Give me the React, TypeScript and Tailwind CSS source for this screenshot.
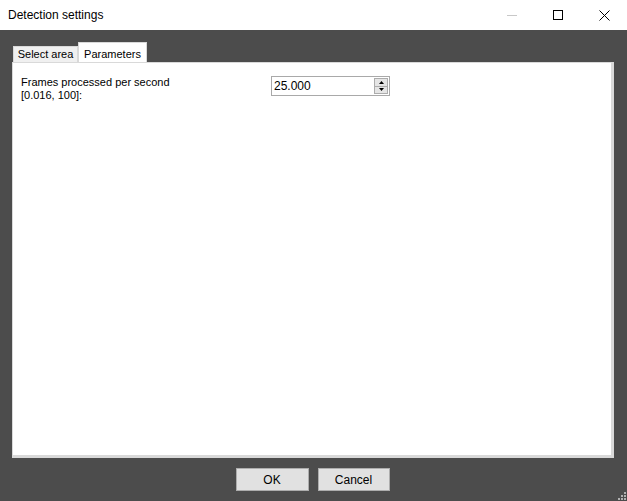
export default function App() {
  const font = { fontFamily: '"Liberation Sans", Arial, sans-serif' };
  return (
    <div className="flex h-[501px] w-[627px] flex-col bg-[#4c4c4c] text-black" style={font}>
      {/* Title bar */}
      <div className="flex h-[30px] shrink-0 items-center bg-white">
        <div className="flex-1 pl-[8px] text-[12px]">Detection settings</div>
        <div className="flex h-full">
          <div className="flex w-[46px] items-center justify-center">
            <div className="h-px w-[10px] bg-[#c8c8c8]" />
          </div>
          <div className="flex w-[46px] items-center justify-center">
            <div className="h-[10px] w-[10px] border border-black" />
          </div>
          <div className="flex w-[46px] items-center justify-center">
            <svg width="11" height="11" viewBox="0 0 11 11">
              <path d="M0.5 0.5L10.5 10.5M10.5 0.5L0.5 10.5" stroke="black" strokeWidth="1" />
            </svg>
          </div>
        </div>
      </div>

      {/* Tabs */}
      <div className="flex flex-1 flex-col px-[12px] pt-[12px]">
        <div className="flex h-[20px] items-end pl-[1px] text-[11px]">
          <div className="flex h-[16px] w-[65px] items-center justify-center border border-b-0 border-[#d9d9d9] bg-[#f0f0f0]">
            Select area
          </div>
          <div className="flex h-[20px] w-[69px] items-start justify-center border border-b-0 border-[#d9d9d9] bg-white pt-[3px]">
            Parameters
          </div>
        </div>
        <div className="flex h-[396px] w-[602px] border border-[#d9d9d9] border-r-[3px] border-b-[3px] bg-white px-[8px] pt-[13px] text-[11px]">
          <div className="w-[250px] leading-[13px]">
            <div>Frames processed per second</div>
            <div>[0.016, 100]:</div>
          </div>
          <div className="flex h-[20px] w-[119px] items-center border border-[#a9a9a9] bg-white">
            <div className="flex-1 pl-[2px] text-[12px]">25.000</div>
            <div className="mr-[1px] flex h-[16px] w-[14px] flex-col border border-[#acacac] bg-[#e5e5e5]">
              <div className="flex flex-1 items-center justify-center border-b border-[#acacac]">
                <svg width="5" height="3" viewBox="0 0 5 3"><path d="M2.5 0L5 3H0Z" fill="black" /></svg>
              </div>
              <div className="flex flex-1 items-center justify-center">
                <svg width="5" height="3" viewBox="0 0 5 3"><path d="M0 0H5L2.5 3Z" fill="black" /></svg>
              </div>
            </div>
          </div>
        </div>

        {/* Buttons */}
        <div className="flex items-start justify-center gap-[9px] pt-[10px] pr-[2px] text-[12px]">
          <button className="h-[23px] w-[73px] border border-[#adadad] bg-[#e1e1e1]">OK</button>
          <button className="h-[23px] w-[72px] border border-[#adadad] bg-[#e1e1e1]">Cancel</button>
        </div>
        <div className="flex flex-1 items-end justify-end pb-[1px]">
          <svg width="9" height="9" viewBox="0 0 9 9" className="mr-[-11px]">
            <g fill="#b0b0b0">
              <rect x="7" y="1" width="2" height="2" />
              <rect x="4" y="4" width="2" height="2" />
              <rect x="7" y="4" width="2" height="2" />
              <rect x="1" y="7" width="2" height="2" />
              <rect x="4" y="7" width="2" height="2" />
              <rect x="7" y="7" width="2" height="2" />
            </g>
          </svg>
        </div>
      </div>
    </div>
  );
}
